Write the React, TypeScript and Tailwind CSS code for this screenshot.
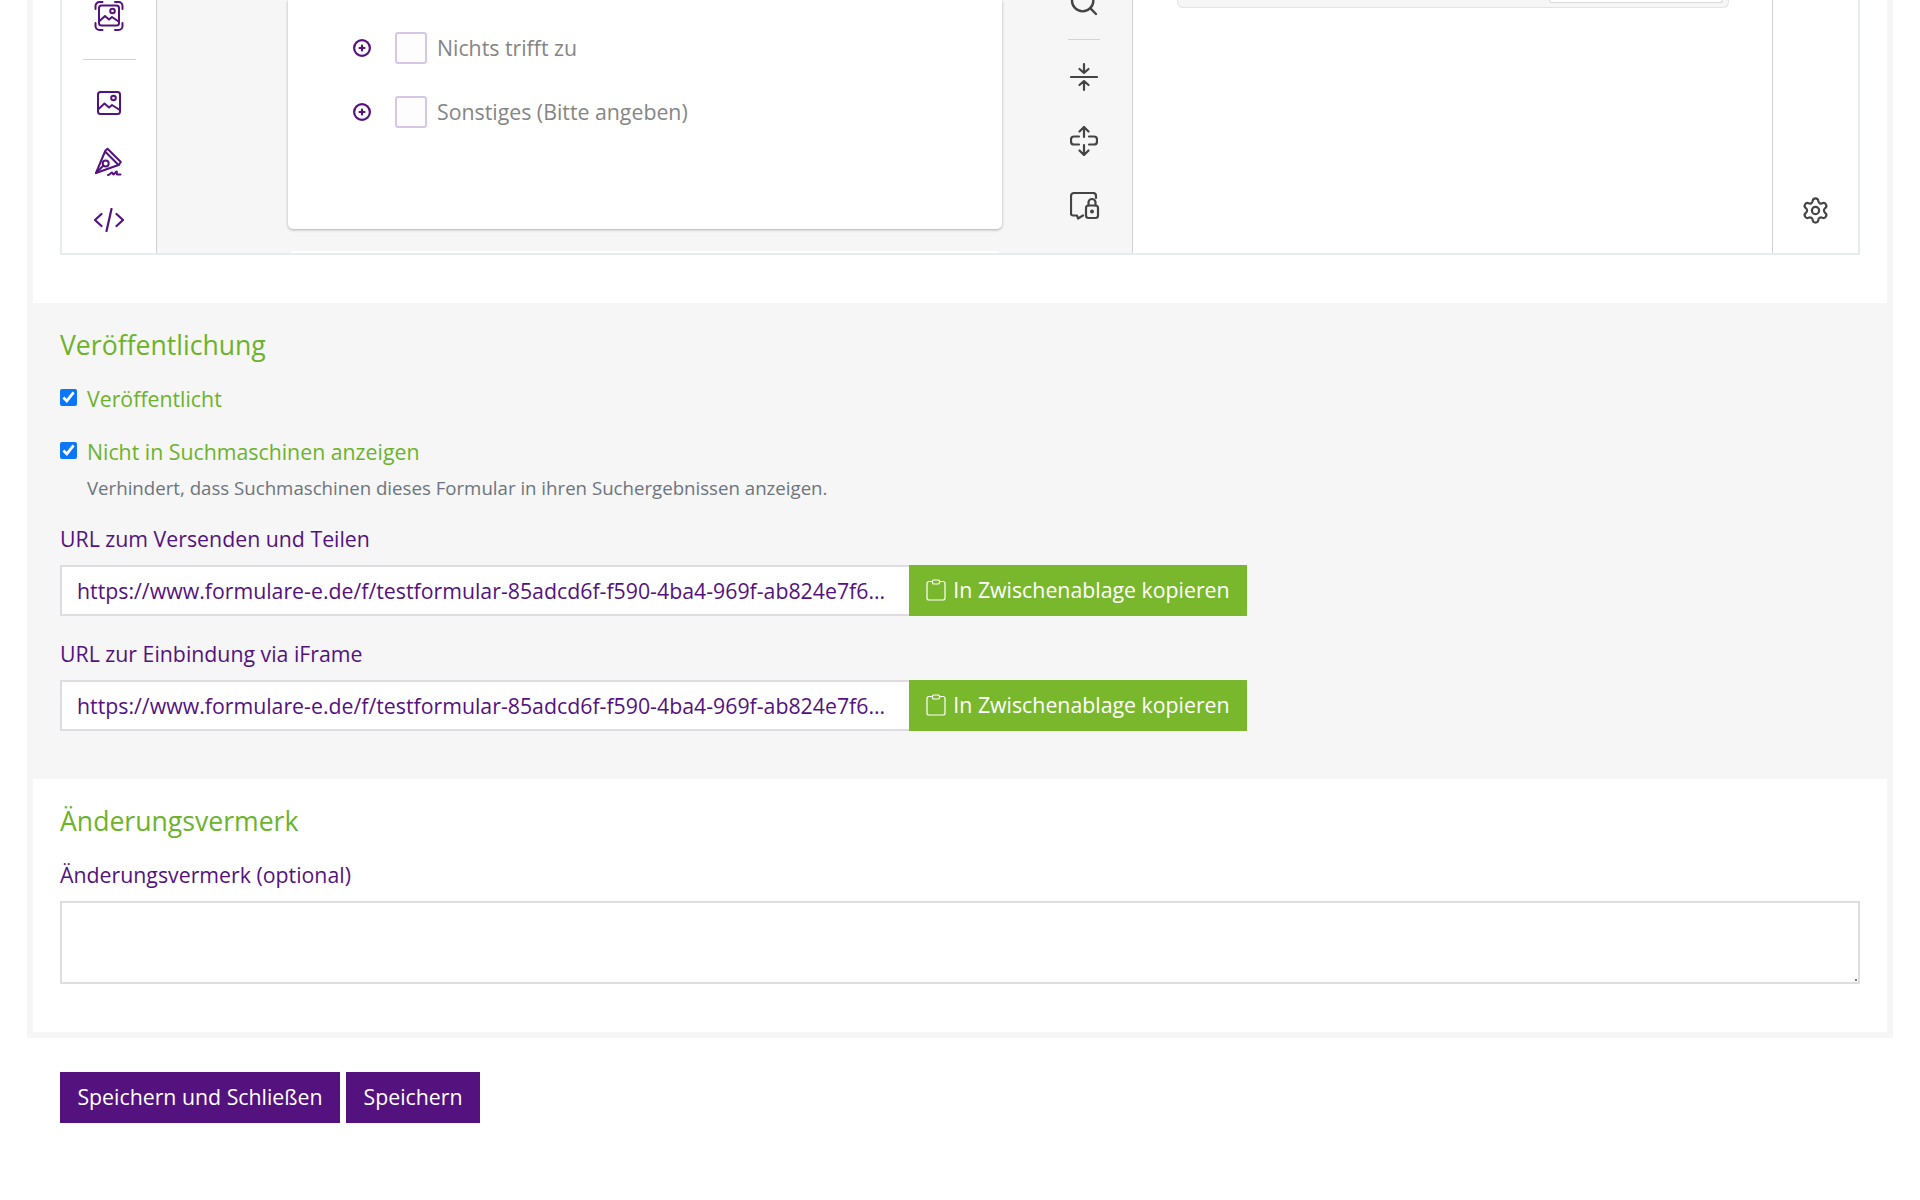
import { Settings, Search } from "lucide-react";

function ScanImageIcon() {
  return (
    <svg width="30" height="30" viewBox="0 0 30 30" fill="none" stroke="#54127f" strokeWidth="2" strokeLinecap="round" strokeLinejoin="round">
      <path d="M1.5 8V5a4 4 0 0 1 4-4h3" />
      <path d="M21 1h3.5a4 4 0 0 1 4 4v3" />
      <path d="M28.5 22v3a4 4 0 0 1-4 4H21" />
      <path d="M8.5 29h-3a4 4 0 0 1-4-4v-3" />
      <rect x="5" y="4.500" width="20" height="20" rx="2.500" />
      <circle cx="18.500" cy="10" r="2.300" />
      <path d="M5.500 20l5.500-5 4 3.500 3-2.500 6.500 4.500" />
    </svg>
  );
}

function ImageIcon() {
  return (
    <svg width="24" height="24" viewBox="0 0 24 24" fill="none" stroke="#54127f" strokeWidth="2" strokeLinecap="round" strokeLinejoin="round">
      <rect x="1" y="1" width="22" height="22" rx="2.500" />
      <circle cx="16.500" cy="7" r="2.300" />
      <path d="M1.500 18l6-5.500 4.500 4 3-2.500 7 4.500" />
    </svg>
  );
}

function PenIcon() {
  return (
    <svg width="30" height="30" viewBox="0 0 30 30" fill="none" stroke="#54127f" strokeWidth="2" strokeLinecap="round" strokeLinejoin="round">
      <path d="M2 26L11 4.500 24.500 18z" />
      <path d="M11.500 3.500l2-1.800L26.800 15l-2 3" />
      <circle cx="11.700" cy="16.500" r="3" />
      <path d="M2 26l7.500-7.500" />
      <path d="M14 28c2-.5 3-2.500 4-2.500s.5 2 1.500 2 2-3 3-3-.5 3 1 3h3" />
    </svg>
  );
}

function CodeIcon() {
  return (
    <svg width="30" height="24" viewBox="0 0 30 24" fill="none" stroke="#54127f" strokeWidth="2.200" strokeLinecap="round" strokeLinejoin="round">
      <path d="M7.500 6L1 12l6.500 6" />
      <path d="M22.500 6L29 12l-6.500 6" />
      <path d="M17.500 1l-5 22" />
    </svg>
  );
}

function CompressIcon() {
  return (
    <svg width="28" height="30" viewBox="0 0 28 30" fill="none" stroke="#444444" strokeWidth="2.200" strokeLinecap="round" strokeLinejoin="round">
      <path d="M1 15h26" />
      <path d="M14 2v9M9.500 7l4.500 4 4.500-4" />
      <path d="M14 28v-9M9.500 23l4.500-4 4.500 4" />
    </svg>
  );
}

function MoveIcon() {
  return (
    <svg width="28" height="30" viewBox="0 0 28 30" fill="none" stroke="#444444" strokeWidth="2.200" strokeLinecap="round" strokeLinejoin="round">
      <path d="M14 1v10M9.500 5.500L14 1l4.500 4.500" />
      <path d="M14 19v10M9.500 24.500L14 29l4.500-4.500" />
      <path d="M9 10.500H4a3 3 0 0 0-3 3v2a3 3 0 0 0 3 3h5" />
      <path d="M19 10.500h5a3 3 0 0 1 3 3v2a3 3 0 0 1-3 3h-5" />
    </svg>
  );
}

function CommentLockIcon() {
  return (
    <svg width="30" height="28" viewBox="0 0 30 28" fill="none" stroke="#444444" strokeWidth="2.200" strokeLinecap="round" strokeLinejoin="round">
      <path d="M26 6V4a3 3 0 0 0-3-3H4a3 3 0 0 0-3 3v17.500a2 2 0 0 0 2 2h4l1 3 5-3" />
      <rect x="16" y="13.500" width="12" height="12.500" rx="2.500" />
      <path d="M18.500 13.500v-3a3.500 3.500 0 0 1 7 0v3" />
      <circle cx="22" cy="19.500" r="0.900" fill="#444444" />
    </svg>
  );
}

function AddIcon() {
  return (
    <svg width="20" height="20" viewBox="0 0 20 20" fill="none" stroke="#54127f" strokeWidth="2.200" strokeLinecap="round">
      <circle cx="10" cy="10" r="7.900" />
      <path d="M10 7.500v5M7.500 10h5" />
    </svg>
  );
}

function ClipboardIcon() {
  return (
    <svg width="20" height="22" viewBox="0 0 20 22" fill="none" stroke="#ffffff" strokeWidth="1.200" strokeLinejoin="round">
      <path d="M6.500 2.500H3a2 2 0 0 0-2 2V19a2 2 0 0 0 2 2h14a2 2 0 0 0 2-2V4.500a2 2 0 0 0-2-2h-3.500" />
      <rect x="6.500" y="1" width="7" height="4" rx="1.200" />
    </svg>
  );
}

const url = "https://www.formulare-e.de/f/testformular-85adcd6f-f590-4ba4-969f-ab824e7f6d12";

function ChoiceRow({ label }: { label: string }) {
  return (
    <div className="flex items-center">
      <AddIcon />
      <div className="ml-[23px] h-8 w-8 rounded-[3px] border-2 border-[#d6c6e4] bg-[#fdfdfd]" />
      <span className="ml-2.5 text-[#858585]">{label}</span>
    </div>
  );
}

function UrlField({ label }: { label: string }) {
  return (
    <div className="flex flex-col">
      <label className="leading-[30px] text-[#54127f]">{label}</label>
      <div className="mt-[11px] flex h-[51px] w-[1187px]">
        <input
          readOnly
          value={url}
          className="h-full min-w-0 flex-1 truncate border-2 border-r-0 border-[#dcdce2] bg-white pl-[15px] pr-[20px] text-[#54127f] outline-none"
        />
        <button className="flex w-[338px] items-center justify-center gap-[7px] bg-[#79b82c] pb-px text-white">
          <ClipboardIcon />
          In Zwischenablage kopieren
        </button>
      </div>
    </div>
  );
}

export default function App() {
  return (
    <div className="h-[1200px] overflow-hidden bg-white px-[27px] font-['Open_Sans',sans-serif] text-[21.3px]">
      <div className="border-x-[6px] border-b-[6px] border-[#f6f6f6]">
        <div className="px-[27px] pb-[48px]">
          <div className="flex h-[255px] border-x-2 border-b-2 border-[#e9ecef]">
            <aside className="flex w-[95px] flex-col items-center border-r border-[#cfcfd4] pt-[1px]">
              <ScanImageIcon />
              <div className="mt-[28px] h-px w-[53px] bg-[#d4d4d8]" />
              <div className="mt-[31px]"><ImageIcon /></div>
              <div className="mt-[32px]"><PenIcon /></div>
              <div className="mt-[31px]"><CodeIcon /></div>
            </aside>

            <main className="flex w-[976px] overflow-hidden border-r border-[#cfcfd4] bg-[#f6f6f6]">
              <div className="ml-[131px] w-[714px]">
                <div className="flex h-[229px] flex-col gap-8 rounded-b-[5px] bg-white pl-[64px] pt-8 shadow-[0_1px_3px_rgba(0,0,0,0.3)]">
                  <ChoiceRow label="Nichts trifft zu" />
                  <ChoiceRow label="Sonstiges (Bitte angeben)" />
                </div>
                <div className="mx-px mt-[22px] h-4 rounded-t-[5px] bg-white" />
              </div>
              <div className="ml-[33px] flex w-[97px] flex-col items-center text-[#444444]">
                <Search size={32} strokeWidth={1.8} className="-mt-[14px]" />
                <div className="mt-[21px] h-px w-8 bg-[#d4d4d8]" />
                <div className="mt-[22px]"><CompressIcon /></div>
                <div className="mt-[34px]"><MoveIcon /></div>
                <div className="mt-[36px] ml-[2px]"><CommentLockIcon /></div>
              </div>
            </main>

            <section className="w-[639px]">
              <div className="ml-[44px] mr-[43px] flex h-[8px] justify-end rounded-b-[6px] border-x border-b border-[#e3e3e3] bg-[#f6f6f6] pr-[5px]">
                <div className="h-[3px] w-[174px] rounded-b-[5px] border-x border-b border-[#d9d9d9] bg-white" />
              </div>
            </section>

            <aside className="flex flex-1 items-end justify-center border-l border-[#cfcfd4] pb-[28px] text-[#444444]">
              <Settings size={29} strokeWidth={1.8} />
            </aside>
          </div>
        </div>

        <div className="bg-[#f6f6f6] px-[27px] pb-[48px] pt-[24px]">
          <h2 className="text-[26.6px] leading-[36px] text-[#6cb32a]">Veröffentlichung</h2>
          <div className="mt-[24px] flex items-start">
            <input type="checkbox" defaultChecked className="mt-[2px] h-[17px] w-[17px] accent-[#0b76f7]" />
            <label className="ml-[10px] leading-[24px] text-[#6cb32a]">Veröffentlicht</label>
          </div>
          <div className="mt-[29px] flex items-start">
            <input type="checkbox" defaultChecked className="mt-[2px] h-[17px] w-[17px] accent-[#0b76f7]" />
            <label className="ml-[10px] leading-[24px] text-[#6cb32a]">Nicht in Suchmaschinen anzeigen</label>
          </div>
          <p className="ml-[27px] mt-[11px] text-[18.67px] leading-[26px] text-[#6c757d]">
            Verhindert, dass Suchmaschinen dieses Formular in ihren Suchergebnissen anzeigen.
          </p>
          <div className="mt-[23px] flex flex-col gap-[23px]">
            <UrlField label="URL zum Versenden und Teilen" />
            <UrlField label="URL zur Einbindung via iFrame" />
          </div>
        </div>

        <div className="px-[27px] pb-[48px] pt-[24px]">
          <h2 className="text-[26.6px] leading-[36px] text-[#6cb32a]">Änderungsvermerk</h2>
          <label className="mt-[21px] block leading-[30px] text-[#54127f]">Änderungsvermerk (optional)</label>
          <div className="relative mt-[11px]">
            <textarea className="block h-[83px] w-full resize-none border-2 border-[#dcdee0] bg-white outline-none" />
            <div className="absolute bottom-[3px] right-[3px] h-[2px] w-[2px] bg-[#777777]" />
          </div>
        </div>
      </div>

      <div className="mt-[34px] flex gap-[6px] pl-[33px]">
        <button className="h-[51px] w-[280px] bg-[#54127f] pb-px text-white">Speichern und Schließen</button>
        <button className="h-[51px] w-[134px] bg-[#54127f] pb-px text-white">Speichern</button>
      </div>
    </div>
  );
}
